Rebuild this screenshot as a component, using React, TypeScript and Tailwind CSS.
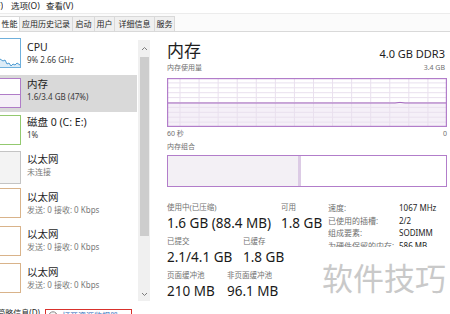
import React from 'react';

const tabs = [
  { label: '性能', w: 'w-[20px]', active: true },
  { label: '应用历史记录', w: 'w-[53px]' },
  { label: '启动', w: 'w-[22px]' },
  { label: '用户', w: 'w-[20px]' },
  { label: '详细信息', w: 'w-[40px]' },
  { label: '服务', w: 'w-[20px]' },
];

type Kind = 'cpu' | 'mem' | 'disk' | 'off' | 'eth';

const items: { title: string; sub: string; kind: Kind }[] = [
  { title: 'CPU', sub: '9% 2.66 GHz', kind: 'cpu' },
  { title: '内存', sub: '1.6/3.4 GB (47%)', kind: 'mem' },
  { title: '磁盘 0 (C: E:)', sub: '1%', kind: 'disk' },
  { title: '以太网', sub: '未连接', kind: 'off' },
  { title: '以太网', sub: '发送: 0 接收: 0 Kbps', kind: 'eth' },
  { title: '以太网', sub: '发送: 0 接收: 0 Kbps', kind: 'eth' },
  { title: '以太网', sub: '发送: 0 接收: 0 Kbps', kind: 'eth' },
];

const Thumb = ({ kind }: { kind: Kind }) => {
  if (kind === 'cpu')
    return (
      <div className="mt-[1px] h-[30px] w-[21px] border-y border-r border-[#6fb0dc] bg-white">
        <svg width="20" height="28" className="block">
          <path d="M0,20 L3,22 L5,21 L7,25 L9,24 L11,27 L13,25 L15,26 L17,24 L20,26 L20,28 L0,28 Z" fill="#dcecf7" />
          <polyline points="0,20 3,22 5,21 7,25 9,24 11,27 13,25 15,26 17,24 20,26" fill="none" stroke="#4c9bd3" strokeWidth="1" />
        </svg>
      </div>
    );
  if (kind === 'mem')
    return (
      <div className="mt-[3px] flex h-[30px] w-[21px] flex-col border-y border-r border-[#b07cc8] bg-white">
        <div className="h-[15px]" />
        <div className="flex-1 border-t border-[#b07cc8] bg-[#f5f0f8]" />
      </div>
    );
  if (kind === 'disk')
    return <div className="mt-[3px] h-[30px] w-[21px] border-y border-r border-[#93c96f] bg-white" />;
  if (kind === 'off')
    return <div className="mt-[1px] h-[33px] w-[21px] border-y border-r border-[#c4c4c4] bg-[#f3f3f3]" />;
  return <div className="mt-[1px] h-[30px] w-[21px] border-y border-r border-[#d9b38a] bg-white" />;
};

const MemGraph = () => {
  const vlines = Array.from({ length: 14 }, (_, i) => 13 + i * 19.07);
  const hlines = Array.from({ length: 9 }, (_, i) => (i + 1) * 4.9);
  return (
    <svg width="280" height="49" className="block">
      <rect x="0" y="25" width="280" height="24" fill="#f5f0f8" />
      {vlines.map((x) => (
        <line key={x} x1={x} x2={x} y1="0" y2="49" stroke="#e9e0ee" strokeWidth="1" />
      ))}
      {hlines.map((y) => (
        <line key={y} x1="0" x2="280" y1={y} y2={y} stroke="#e9e0ee" strokeWidth="1" />
      ))}
      <polyline points="0,25 228,25 233,24.4 238,25 280,25" fill="none" stroke="#a366bd" strokeWidth="1" />
      <rect x="0.6" y="0.6" width="278.8" height="47.8" fill="none" stroke="#b27dca" strokeWidth="1.2" />
    </svg>
  );
};

const Stat = ({ label, value, w }: { label: string; value: string; w?: string }) => (
  <div className={`flex flex-col ${w ?? ''}`}>
    <div className="h-[10px] text-[7.5px] leading-[10px] text-[#707070] whitespace-nowrap">{label}</div>
    <div className="mt-[2.5px] h-[17px] text-[13.5px] leading-[17px] text-[#1a1a1a] whitespace-nowrap">{value}</div>
  </div>
);

export default function App() {
  return (
    <div className="relative h-[314px] w-[450px] overflow-hidden bg-white font-['Noto_Sans','Noto_Sans_CJK_SC',sans-serif] text-[#1e1e1e]">
      {/* 菜单 */}
      <div className="flex h-[13px] items-center text-[8.5px] leading-none text-[#222]">
        <div className="flex w-[3px] justify-end overflow-hidden whitespace-nowrap">
          <span className="shrink-0">文件(F)</span>
        </div>
        <span className="ml-[8px] w-[35px] whitespace-nowrap">选项(O)</span>
        <span className="whitespace-nowrap">查看(V)</span>
      </div>

      {/* 标签页 */}
      <div className="flex h-[19px] items-end border-t border-b border-t-[#ececec] border-b-[#d9d9d9] bg-[#fbfbfb]">
        {tabs.map((t) => (
          <div
            key={t.label}
            className={`flex h-[15px] ${t.w} items-center justify-center border-t border-r border-[#d9d9d9] text-[8px] leading-none whitespace-nowrap ${
              t.active ? 'bg-white' : 'bg-[#f0f0f0]'
            }`}
          >
            {t.label}
          </div>
        ))}
      </div>

      <div className="flex h-[282px]">
        {/* 左侧列表 */}
        <div className="flex w-[150px] flex-col">
          <div className="flex h-[270px]">
            <div className="w-[137px] pt-[5px]">
              {items.map((it, i) => (
                <div
                  key={i}
                  className={`flex h-[37.5px] ${it.kind === 'mem' ? 'bg-[#d9d9d9]' : ''}`}
                >
                  <Thumb kind={it.kind} />
                  <div className="ml-[6px] pt-[3.5px]">
                    <div className="h-[13px] text-[10.5px] leading-[13px] whitespace-nowrap">{it.title}</div>
                    <div
                      className={`h-[11px] text-[8px] leading-[11px] whitespace-nowrap ${
                        it.kind === 'off' || it.kind === 'eth' ? 'text-[#7a7a7a]' : 'text-[#3a3a3a]'
                      }`}
                    >
                      {it.sub}
                    </div>
                  </div>
                </div>
              ))}
            </div>
            {/* 滚动条 */}
            <div className="ml-[1px] flex w-[12px] flex-col pt-[8px] pb-[1px]">
              <div className="flex flex-1 flex-col bg-[#f0f0f0]">
                <div className="flex h-[17px] items-center justify-center">
                  <svg width="7" height="5" className="block">
                    <polyline points="1,4 3.5,1.5 6,4" fill="none" stroke="#7d7d7d" strokeWidth="1" />
                  </svg>
                </div>
                <div className="mx-auto h-[179px] w-[9px] bg-[#cdcdcd]" />
                <div className="flex-1" />
                <div className="flex h-[14px] items-center justify-center">
                  <svg width="7" height="5" className="block">
                    <polyline points="1,1 3.5,3.5 6,1" fill="none" stroke="#7d7d7d" strokeWidth="1" />
                  </svg>
                </div>
              </div>
            </div>
          </div>
          {/* 底部 */}
          <div className="flex h-[12px] items-start pt-[6px]">
            <div className="flex w-[40px] justify-end overflow-hidden whitespace-nowrap text-[8px] leading-[10px]">
              <span className="shrink-0">简略信息(D)</span>
            </div>
            <div className="ml-[5px] mt-[1px] flex h-[12px] w-[87px] items-start border-[1.5px] border-[#d8312c] pl-[2px] pt-[1px]">
              <svg width="10" height="10" className="block shrink-0">
                <circle cx="5" cy="5" r="4.2" fill="#f4f4f4" stroke="#8a8a8a" strokeWidth="1" />
                <line x1="5" y1="5" x2="7.2" y2="2.8" stroke="#c0392b" strokeWidth="1" />
              </svg>
              <span className="ml-[4px] text-[8px] leading-[10px] text-[#1d64b8] whitespace-nowrap">打开资源监视器</span>
            </div>
          </div>
        </div>

        {/* 右侧详情 */}
        <div className="ml-[17px] flex w-[280px] flex-col pt-[9px]">
          <div className="flex h-[20px] items-end justify-between">
            <div className="text-[17px] leading-[20px]">内存</div>
            <div className="mr-[2px] text-[11px] leading-[14px]">4.0 GB DDR3</div>
          </div>
          <div className="mt-[2px] flex h-[10px] items-center justify-between text-[7px] leading-[10px] text-[#707070]">
            <span>内存使用量</span>
            <span className="mr-[2px]">3.4 GB</span>
          </div>
          <div className="mt-[5px]">
            <MemGraph />
          </div>
          <div className="mt-[2px] flex h-[10px] items-center justify-between text-[7px] leading-[10px] text-[#707070]">
            <span>60 秒</span>
            <span>0</span>
          </div>
          <div className="mt-[3px] h-[10px] text-[7px] leading-[10px] text-[#707070]">内存组合</div>
          <div className="mt-[3px] flex h-[32px] border-[1.2px] border-[#b27dca]">
            <div className="w-[130px] bg-[#f3f0f5]" />
            <div className="w-[3px] bg-[#dccbe5]" />
            <div className="flex-1 bg-white" />
          </div>

          <div className="mt-[15px] flex">
            <div className="flex w-[161px] flex-col gap-[4.5px]">
              <div className="flex">
                <Stat label="使用中(已压缩)" value="1.6 GB (88.4 MB)" w="w-[114px]" />
                <Stat label="可用" value="1.8 GB" />
              </div>
              <div className="flex">
                <Stat label="已提交" value="2.1/4.1 GB" w="w-[76px]" />
                <Stat label="已缓存" value="1.8 GB" />
              </div>
              <div className="flex">
                <Stat label="页面缓冲池" value="210 MB" w="w-[60px]" />
                <Stat label="非页面缓冲池" value="96.1 MB" />
              </div>
            </div>
            <div className="h-[45px] flex-1 overflow-hidden text-[8px] leading-[12.5px]">
              {[
                ['速度:', '1067 MHz'],
                ['已使用的插槽:', '2/2'],
                ['组成要素:', 'SODIMM'],
                ['为硬件保留的内存:', '586 MB'],
              ].map(([k, v]) => (
                <div key={k} className="flex h-[12.5px]">
                  <span className="w-[71px] text-[#707070] whitespace-nowrap">{k}</span>
                  <span className="whitespace-nowrap">{v}</span>
                </div>
              ))}
            </div>
          </div>
        </div>
      </div>

      {/* 水印 */}
      <div className="pointer-events-none absolute left-[322px] top-[263px] text-[31px] leading-[31px] text-[#c9c9c9] whitespace-nowrap">
        软件技巧
      </div>
    </div>
  );
}
